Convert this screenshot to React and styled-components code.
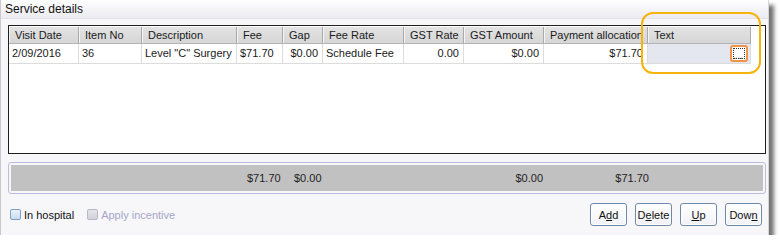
import React from 'react';
import styled, { createGlobalStyle } from 'styled-components';

const GlobalStyle = createGlobalStyle`
  html, body {
    margin: 0;
    padding: 0;
    background: #ffffff;
  }
  body {
    font-family: Tahoma, "Liberation Sans", Arial, sans-serif;
    font-size: 11px;
    color: #1a1a1a;
  }
`;

const columns = [
  { key: 'date', title: 'Visit Date', width: 70, align: 'left' },
  { key: 'item', title: 'Item No', width: 63, align: 'left' },
  { key: 'desc', title: 'Description', width: 95, align: 'left' },
  { key: 'fee', title: 'Fee', width: 46, align: 'left' },
  { key: 'gap', title: 'Gap', width: 40, align: 'right' },
  { key: 'rate', title: 'Fee Rate', width: 81, align: 'left' },
  { key: 'gstRate', title: 'GST Rate', width: 60, align: 'right' },
  { key: 'gstAmt', title: 'GST Amount', width: 80, align: 'right' },
  { key: 'pay', title: 'Payment allocation', width: 104, align: 'right' },
  { key: 'text', title: 'Text', width: 103, align: 'left' },
];

const rows = [
  {
    date: '2/09/2016',
    item: '36',
    desc: 'Level "C" Surgery',
    fee: '$71.70',
    gap: '$0.00',
    rate: 'Schedule Fee',
    gstRate: '0.00',
    gstAmt: '$0.00',
    pay: '$71.70',
    text: '',
  },
];

const gridTemplate = columns.map((c) => `${c.width}px`).join(' ') + ' 1fr';

const Window = styled.div`
  position: relative;
  width: 769px;
  height: 235px;
  box-sizing: border-box;
  background: #f7f7fa;
  border-left: 1px solid #c9c9cf;
  border-right: 1px solid #d4d4da;
  box-shadow: 5px 5px 4px rgba(0, 0, 0, 0.55);
  display: flex;
  flex-direction: column;
`;

const TitleBar = styled.div`
  height: 18px;
  line-height: 18px;
  padding-left: 4px;
  font-size: 12px;
  color: #111;
  background: linear-gradient(#ffffff, #ebebf1);
  border-bottom: 1px solid #e2e2ea;
`;

const Body = styled.div`
  flex: 1;
  display: flex;
  flex-direction: column;
  padding: 6px 2px 0 7px;
`;

const Grid = styled.div`
  height: 129px;
  box-sizing: border-box;
  border: 1px solid #1e1e1e;
  background: #ffffff;
  padding-top: 1px;
`;

const Row = styled.div`
  display: grid;
  grid-template-columns: ${gridTemplate};
`;

const HeadCell = styled.div`
  height: 16px;
  line-height: 16px;
  padding-left: 6px;
  font-size: 11px;
  white-space: nowrap;
  overflow: hidden;
  background: ${({ $filler }) => ($filler ? '#ffffff' : 'linear-gradient(#e3e3e3, #d6d6d6)')};
  border-right: ${({ $filler }) => ($filler ? 'none' : '1px solid #a9a9a9')};
  border-bottom: ${({ $filler }) => ($filler ? 'none' : '1px solid #b4b4b4')};
  box-shadow: ${({ $filler }) => ($filler ? 'none' : 'inset 1px 0 0 #f4f4f4')};
`;

const Cell = styled.div`
  height: 19px;
  line-height: 19px;
  padding: 0 4px 0 3px;
  font-size: 11px;
  white-space: nowrap;
  text-align: ${({ $align }) => $align};
  border-right: ${({ $filler }) => ($filler ? 'none' : '1px solid #dcdcdc')};
  border-bottom: ${({ $filler }) => ($filler ? 'none' : '1px solid #dcdcdc')};
`;

const TextCell = styled(Cell)`
  position: relative;
  background: #e4e7ef;
  padding: 0;
`;

const EllipsisButton = styled.button`
  position: absolute;
  right: 2px;
  top: 1px;
  width: 18px;
  height: 17px;
  padding: 0;
  box-sizing: border-box;
  border: 2px solid #f0944a;
  border-radius: 3px;
  background: #ffffff;
  font-family: inherit;
  font-size: 10px;
  line-height: 8px;
  color: #000;
  display: flex;
  align-items: flex-end;
  justify-content: center;
  outline: 1px dotted #333;
  outline-offset: -4px;
`;

const Highlight = styled.div`
  position: absolute;
  left: 640px;
  top: 12px;
  width: 116px;
  height: 58px;
  border: 2.5px solid #f6b40a;
  border-radius: 12px;
  pointer-events: none;
`;

const TotalsFrame = styled.div`
  margin-top: 8px;
  height: 32px;
  box-sizing: border-box;
  border: 1px solid #b9bedf;
  border-radius: 3px;
  padding: 2px;
  background: #f7f7fa;
`;

const TotalsBar = styled.div`
  height: 100%;
  background: #c2c1c1;
  display: grid;
  grid-template-columns: ${gridTemplate};
  align-items: center;
  font-size: 11px;
  color: #222;
`;

const TotalCell = styled.div`
  text-align: ${({ $align }) => $align};
  padding-left: ${({ $pl }) => $pl || 0}px;
  padding-right: ${({ $pr }) => $pr || 0}px;
  white-space: nowrap;
`;

const Footer = styled.div`
  flex: 1;
  display: flex;
  align-items: center;
  justify-content: space-between;
  padding: 0 4px 0 2px;
`;

const Checks = styled.div`
  display: flex;
  align-items: center;
  gap: 13px;
`;

const CheckLabel = styled.label`
  display: flex;
  align-items: center;
  gap: 3px;
  font-size: 11px;
  color: ${({ $disabled }) => ($disabled ? '#a4a6c8' : '#111')};
`;

const Box = styled.span`
  width: 11px;
  height: 11px;
  box-sizing: border-box;
  border: 1px solid ${({ $disabled }) => ($disabled ? '#b8b8c8' : '#7d9fc9')};
  border-radius: 2px;
  background: ${({ $disabled }) =>
    $disabled ? 'linear-gradient(#e4e4ea, #d2d2da)' : 'linear-gradient(#eaf2fb, #c9dcf0)'};
`;

const Buttons = styled.div`
  display: flex;
  gap: 8px;
`;

const Btn = styled.button`
  width: 37px;
  height: 23px;
  padding: 0;
  font-family: inherit;
  font-size: 11px;
  color: #111;
  border: 1px solid #6f87a8;
  border-radius: 3px;
  background: linear-gradient(#ffffff, #f1f2f6);
  box-shadow: inset 0 0 0 1px #ffffff;
  & u {
    text-decoration: underline;
  }
`;

function App() {
  return (
    <>
      <GlobalStyle />
      <Window>
        <TitleBar>Service details</TitleBar>
        <Body>
          <Grid>
            <Row>
              {columns.map((c) => (
                <HeadCell key={c.key}>{c.title}</HeadCell>
              ))}
              <HeadCell $filler />
            </Row>
            {rows.map((r, i) => (
              <Row key={i}>
                {columns.map((c) =>
                  c.key === 'text' ? (
                    <TextCell key={c.key} $align="left">
                      <EllipsisButton>...</EllipsisButton>
                    </TextCell>
                  ) : (
                    <Cell key={c.key} $align={c.align}>
                      {r[c.key]}
                    </Cell>
                  )
                )}
                <Cell $filler />
              </Row>
            ))}
          </Grid>
          <TotalsFrame>
            <TotalsBar>
              <TotalCell />
              <TotalCell />
              <TotalCell />
              <TotalCell $align="left" $pl={8}>$71.70</TotalCell>
              <TotalCell $align="left" $pl={9}>$0.00</TotalCell>
              <TotalCell />
              <TotalCell />
              <TotalCell $align="right" $pr={3}>$0.00</TotalCell>
              <TotalCell $align="right" $pr={1}>$71.70</TotalCell>
              <TotalCell />
              <TotalCell />
            </TotalsBar>
          </TotalsFrame>
          <Footer>
            <Checks>
              <CheckLabel>
                <Box />
                In hospital
              </CheckLabel>
              <CheckLabel $disabled>
                <Box $disabled />
                Apply incentive
              </CheckLabel>
            </Checks>
            <Buttons>
              <Btn>
                A<u>d</u>d
              </Btn>
              <Btn>
                D<u>e</u>lete
              </Btn>
              <Btn>
                <u>U</u>p
              </Btn>
              <Btn>
                Dow<u>n</u>
              </Btn>
            </Buttons>
          </Footer>
        </Body>
        <Highlight />
      </Window>
    </>
  );
}

export default App;
